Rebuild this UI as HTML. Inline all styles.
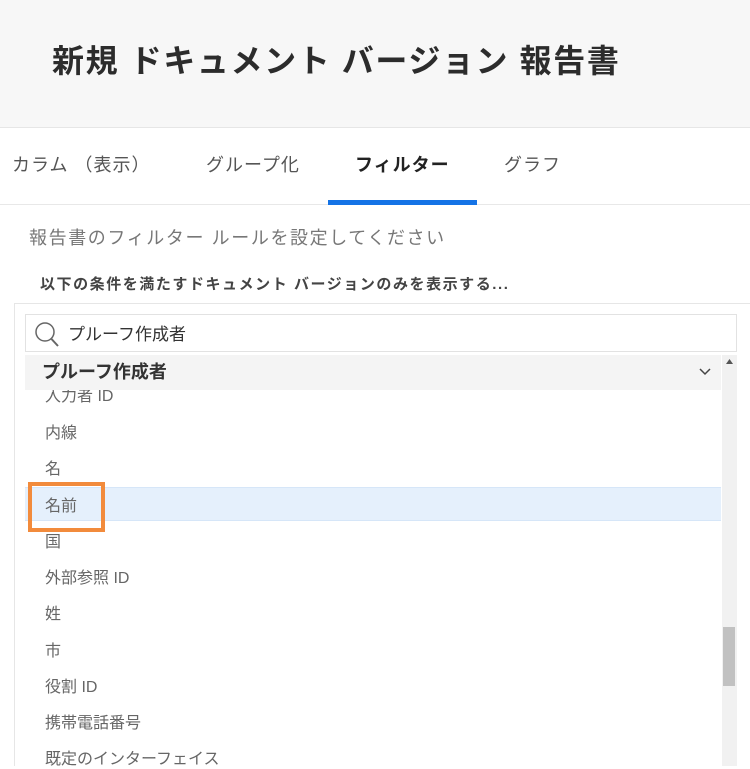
<!DOCTYPE html>
<html><head><meta charset="utf-8"><style>
*{margin:0;padding:0;box-sizing:border-box}
body{width:750px;height:766px;overflow:hidden;background:#fff;font-family:"Liberation Sans","Noto Sans CJK JP",sans-serif;position:relative}
.hdr{position:absolute;left:0;top:0;width:750px;height:128px;background:#f7f7f7;border-bottom:1px solid #e6e6e6}
.hdr h1{position:absolute;left:52px;top:36px;font-size:32px;font-weight:bold;color:#2c2c2c;letter-spacing:1.6px}
.tabs{position:absolute;left:0;top:128px;width:750px;height:77px;border-bottom:1px solid #e8e8e8}
.tab{position:absolute;top:23px;font-size:18px;color:#555;letter-spacing:1px}
.act{font-weight:bold;color:#222}
.ul{position:absolute;left:328px;top:72px;width:149px;height:5px;background:#1473e6}
.sub{position:absolute;left:29px;top:224px;font-size:18px;color:#777;letter-spacing:1.6px}
.cond{position:absolute;left:40px;top:273px;font-size:15px;font-weight:bold;color:#444;letter-spacing:1.55px}
.box{position:absolute;left:14px;top:303px;width:736px;height:463px;border-top:1px solid #e6e6e6;border-left:1px solid #e6e6e6}
.search{position:absolute;left:25px;top:314px;width:712px;height:38px;border:1px solid #e2e2e2;background:#fff}
.search span{position:absolute;left:42px;top:5px;font-size:17px;color:#333}
.grp{position:absolute;left:25px;top:355px;width:696px;height:35px;background:#f4f4f4}
.grp span{position:absolute;left:17px;top:3px;font-size:18px;font-weight:bold;color:#333}
.sb{position:absolute;left:722px;top:355px;width:15px;height:411px;background:#f1f1f1}
.thumb{position:absolute;left:1px;top:272px;width:12px;height:59px;background:#c1c1c1}
.it{position:absolute;left:45px;font-size:16px;color:#666}
.hl{position:absolute;left:25px;top:487px;width:696px;height:34px;background:#e5f0fc;border-top:1px solid #d6e6f8;border-bottom:1px solid #d6e6f8}
.ob{position:absolute;left:28px;top:482px;width:77px;height:50px;border:4px solid #f28b3c}
</style></head><body>
<div class="hdr"><h1>新規 ドキュメント バージョン 報告書</h1></div>
<div class="tabs">
<div class="tab" style="left:12px">カラム （表示）</div>
<div class="tab" style="left:206px">グループ化</div>
<div class="tab act" style="left:355px">フィルター</div>
<div class="tab" style="left:504px">グラフ</div>
<div class="ul"></div>
</div>
<div class="sub">報告書のフィルター ルールを設定してください</div>
<div class="cond">以下の条件を満たすドキュメント バージョンのみを表示する...</div>
<div class="box"></div>
<div class="search"><svg style="position:absolute;left:8px;top:6px" width="26" height="28" viewBox="0 0 26 28"><circle cx="11" cy="11" r="9" fill="none" stroke="#666" stroke-width="1.5"/><line x1="17.5" y1="18" x2="24" y2="25" stroke="#666" stroke-width="2"/></svg><span>プルーフ作成者</span></div>
<div class="grp"><span>プルーフ作成者</span><svg style="position:absolute;left:674px;top:13px" width="12" height="8" viewBox="0 0 12 8"><path d="M1 1 L6 6 L11 1" fill="none" stroke="#444" stroke-width="1.5"/></svg></div>
<div class="hl"></div>
<div class="it" style="top:382px;clip-path:inset(8px 0 0 0)">入力者 ID</div>
<div class="it" style="top:419px">内線</div>
<div class="it" style="top:455px">名</div>
<div class="it" style="top:492px">名前</div>
<div class="it" style="top:528px">国</div>
<div class="it" style="top:564px">外部参照 ID</div>
<div class="it" style="top:600px">姓</div>
<div class="it" style="top:637px">市</div>
<div class="it" style="top:673px">役割 ID</div>
<div class="it" style="top:709px">携帯電話番号</div>
<div class="it" style="top:745px">既定のインターフェイス</div>
<div class="ob"></div>
<div class="sb"><svg style="position:absolute;left:4px;top:4px" width="7" height="5"><path d="M0 5 L3.5 0 L7 5Z" fill="#555"/></svg><div class="thumb"></div></div>
</body></html>
